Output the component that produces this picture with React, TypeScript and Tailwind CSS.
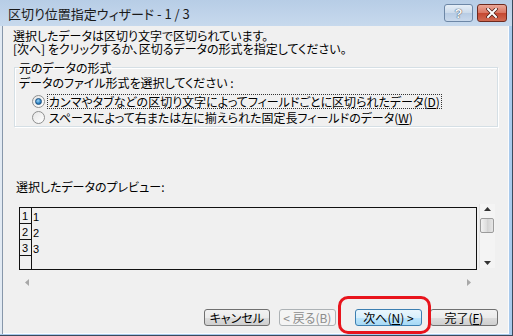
const jp = "font-['Noto_Sans_CJK_JP',sans-serif] [font-feature-settings:'palt']"

function WinButton({ children, width, kind = 'normal', className = '' }: { children: React.ReactNode; width: string; kind?: 'normal' | 'default' | 'disabled'; className?: string }) {
  const look =
    kind === 'default'
      ? 'border-[#3c7fb1] bg-[linear-gradient(#eaf6fd,#d9f0fc_50%,#bee6fd_50%,#a7d9f5)] text-black'
      : kind === 'disabled'
        ? 'border-[#adb2b5] bg-[#f4f4f4] text-[#8d8d8d]'
        : 'border-[#707070] bg-[linear-gradient(#f2f2f2,#ebebeb_50%,#dddddd_50%,#cfcfcf)] text-black'
  return (
    <div className={`${width} h-[17px] border rounded-[3px] flex items-center justify-center text-[12px] leading-[13px] ${look} ${className}`}>
      {children}
    </div>
  )
}

function Radio({ checked }: { checked?: boolean }) {
  return (
    <div className="w-[13px] h-[13px] rounded-full border border-[#8e8f8f] bg-[linear-gradient(135deg,#e6e6e6,#ffffff)] flex items-center justify-center shrink-0">
      {checked && <div className="w-[7px] h-[7px] rounded-full border border-[#1d5281] bg-[radial-gradient(circle_at_40%_35%,#9fd6f8,#2a7fc0_60%,#1a4f86)]" />}
    </div>
  )
}

function Tri({ dir, color = '#000' }: { dir: 'up' | 'down' | 'left' | 'right'; color?: string }) {
  const pts = {
    up: '0,4 3.5,0 7,4',
    down: '0,0 3.5,4 7,0',
    left: '4,0 0,3.5 4,7',
    right: '0,0 4,3.5 0,7',
  }[dir]
  const vertical = dir === 'up' || dir === 'down'
  return (
    <svg width={vertical ? 7 : 4} height={vertical ? 4 : 7} viewBox={vertical ? '0 0 7 4' : '0 0 4 7'}>
      <polygon points={pts} fill={color} />
    </svg>
  )
}

function TitleBar() {
  return (
    <div className="h-[26px] flex items-start pl-[8px] pr-[5px] bg-[linear-gradient(#b7cde6,#c7d9ed)]">
      <div className="mt-[7px] text-[13px] leading-[14px] text-[#1a1a1a]">区切り位置指定ウィザード - 1 / 3</div>
      <div className="ml-auto mt-[4px] flex gap-[4px]">
        <div className="w-[29px] h-[18px] rounded-[3px] border border-[#6d87a6] bg-[linear-gradient(#e6eef7,#cbdaeb_50%,#b7cbe3_50%,#c9d9ec)] flex items-center justify-center">
          <span className="font-['Liberation_Sans',sans-serif] font-bold text-[13px] leading-[13px] text-[#f6f8fb] [text-shadow:0_0_1px_#3c4a5a,0_0_1px_#3c4a5a]">?</span>
        </div>
        <div className="w-[30px] h-[18px] rounded-[3px] border border-[#6e2a1f] bg-[linear-gradient(#eaa899,#d9735f_50%,#c4462f_50%,#d06a52)] flex items-center justify-center">
          <svg width="12" height="10" viewBox="0 0 12 10">
            <path d="M2 1 L10 9 M10 1 L2 9" stroke="#4a1d16" strokeWidth="3.4" strokeLinecap="square" />
            <path d="M2 1 L10 9 M10 1 L2 9" stroke="#ffffff" strokeWidth="2" strokeLinecap="square" />
          </svg>
        </div>
      </div>
    </div>
  )
}

function Preview() {
  const nums = ['1', '2', '3']
  return (
    <div className="mt-[11px] flex items-start">
      <div className="mt-[3px] ml-[6px] w-[458px] h-[63px] border border-[#111] flex">
        <div className="w-[12px] border-r border-[#111] flex flex-col font-['Liberation_Sans',sans-serif] text-[11px] leading-[11px]">
          {nums.map(n => (
            <div key={n} className="h-[16px] border-b border-[#111] flex items-end pl-[2px] pb-[1px]">{n}</div>
          ))}
        </div>
        <div className="pl-[1px] pt-[1px] font-['Liberation_Sans',sans-serif] text-[11px] leading-[16px]">
          {nums.map(n => (
            <div key={n}>{n}</div>
          ))}
        </div>
      </div>
      <div className="ml-[2px] w-[16px] h-[64px] bg-[#f4f4f4] border-l border-[#e6e6e6] flex flex-col items-center">
        <div className="mt-[3px]"><Tri dir="up" color="#333" /></div>
        <div className="mt-[7px] w-[14px] h-[15px] rounded-[2px] border border-[#9c9c9c] bg-[linear-gradient(90deg,#f2f2f2,#dcdcdc_50%,#d2d2d2_50%,#e6e6e6)]" />
        <div className="mt-auto mb-[3px]"><Tri dir="down" color="#333" /></div>
      </div>
    </div>
  )
}

export default function App() {
  return (
    <div className={`relative w-[513px] h-[336px] flex flex-col bg-[#a9caec] border-r border-b border-[#3b4a5c] text-[12px] leading-[13px] text-black overflow-hidden ${jp}`}>
      <TitleBar />
      <div className="flex-1 flex">
        <div className="w-[4px] bg-[#e2eaf3] border-r border-[#8797aa]" />
        <div className="flex-1 flex flex-col bg-[#f0f0f0] border-r border-b border-[#fafcfe] px-[10px] pt-[3px]">
          <p>選択したデータは区切り文字で区切られています。</p>
          <p>[次へ] をクリックするか、区切るデータの形式を指定してください。</p>

          <fieldset className="mt-[6px] ml-[1px] w-[484px] border border-[#d5dfe5] shadow-[inset_1px_1px_0_#fff,1px_1px_0_#fff] pl-[4px] pb-[1px]">
            <legend className="leading-[13px]">元のデータの形式</legend>
            <p className="mt-[2px]">データのファイル形式を選択してください :</p>
            <div className="mt-[4px] flex flex-col">
              <div className="h-[16px] flex items-center ml-[13px]">
                <Radio checked />
                <span className="ml-[2px] px-[1px] border border-dotted border-[#333] leading-[13px]">
                  カンマやタブなどの区切り文字によってフィールドごとに区切られたデータ(<span className="underline">D</span>)
                </span>
              </div>
              <div className="h-[16px] flex items-center ml-[13px]">
                <Radio />
                <span className="ml-[3px] px-[1px] leading-[13px]">
                  スペースによって右または左に揃えられた固定長フィールドのデータ(<span className="underline">W</span>)
                </span>
              </div>
            </div>
          </fieldset>

          <p className="mt-[53px] ml-[3px]">選択したデータのプレビュー:</p>
          <Preview />

          <div className="mt-[7px] ml-[6px] w-[458px] h-[10px] flex items-center justify-between px-[6px]">
            <Tri dir="left" color="#a8a8a8" />
            <Tri dir="right" color="#a8a8a8" />
          </div>

          <div className="mt-[22px] flex justify-end">
            <WinButton width="w-[66px]">キャンセル</WinButton>
            <WinButton width="w-[57px]" kind="disabled" className="ml-[9px]">&lt; 戻る(B)</WinButton>
            <WinButton width="w-[67px]" kind="default" className="ml-[19px]">
              次へ(<span className="underline">N</span>) &gt;
            </WinButton>
            <WinButton width="w-[68px]" className="ml-[8px]">
              完了(<span className="underline">F</span>)
            </WinButton>
          </div>
        </div>
        <div className="w-[5px]" />
      </div>
      <div className="h-[1px]" />

      <div className="absolute left-[338px] top-[296px] w-[93px] h-[38px] border-[3px] border-[#e8141c] rounded-[10px]" />
    </div>
  )
}
